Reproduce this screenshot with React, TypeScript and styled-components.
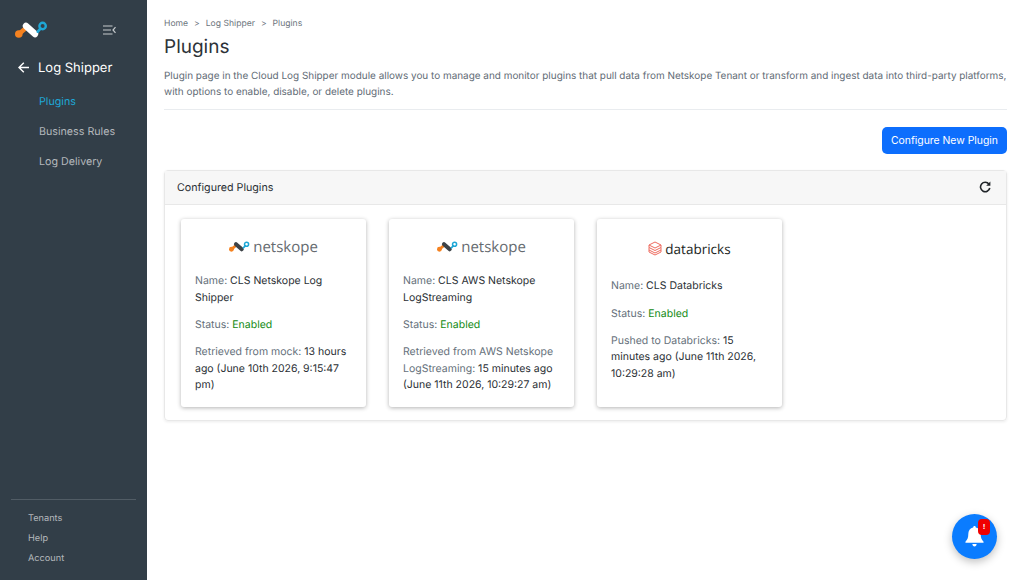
import { FC, ReactNode } from 'react';
import styled, { createGlobalStyle } from 'styled-components';

const GlobalStyle = createGlobalStyle`
  html, body {
    margin: 0;
    padding: 0;
    height: 100%;
    background: #ffffff;
    font-family: Inter, "Liberation Sans", sans-serif;
    text-rendering: geometricPrecision;
  }
  * { box-sizing: border-box; }
`;

const Page = styled.div`
  display: flex;
  position: relative;
  width: 1024px;
  height: 580px;
  overflow: hidden;
`;

const Sidebar = styled.aside`
  display: flex;
  flex-direction: column;
  flex: 0 0 147px;
  height: 580px;
  background: #323e48;
`;

const SidebarTop = styled.div`
  display: flex;
  align-items: center;
  justify-content: space-between;
  height: 22px;
  margin-top: 19px;
  padding: 0 31px 0 15px;
`;

const ModuleTitle = styled.div`
  display: flex;
  align-items: center;
  gap: 9px;
  margin-top: 15.5px;
  padding-left: 18px;
  height: 22px;
  color: #ffffff;
  font-size: 13px;
  font-weight: 400;
`;

const NavList = styled.nav`
  display: flex;
  flex-direction: column;
  gap: 14px;
  margin-top: 15.5px;
  padding-left: 39px;
`;

const NavItem = styled.div<{ $active?: boolean }>`
  height: 16px;
  line-height: 16px;
  font-size: 10.7px;
  font-weight: 400;
  color: ${({ $active }) => ($active ? '#1ea7d6' : '#b4b8bc')};
`;

const SidebarFooter = styled.div`
  display: flex;
  flex-direction: column;
  gap: 6px;
  margin: auto 11px 14px;
  padding: 12.5px 0 0 17px;
  border-top: 1px solid #515c65;
`;

const FooterItem = styled.div`
  height: 14px;
  line-height: 14px;
  font-size: 9.2px;
  color: #b4b8bc;
`;

const Main = styled.main`
  flex: 1;
  padding: 18px 17px 0 17px;
`;

const Breadcrumbs = styled.div`
  display: flex;
  gap: 6px;
  height: 12px;
  line-height: 12px;
  font-size: 8.6px;
  color: #6c757d;
`;

const PageTitle = styled.h1`
  margin: 5px 0 0;
  height: 24px;
  line-height: 24px;
  font-size: 19px;
  font-weight: 400;
  color: #2d3338;
`;

const Description = styled.p`
  margin: 9.4px 0 0;
  padding-bottom: 8.6px;
  border-bottom: 1px solid #e9ecef;
  line-height: 16px;
  font-size: 9.95px;
  color: #5f6b75;
`;

const Actions = styled.div`
  display: flex;
  justify-content: flex-end;
  margin-top: 17px;
`;

const PrimaryButton = styled.button`
  width: 125px;
  height: 27px;
  padding: 0;
  border: 0;
  border-radius: 5px;
  background: #0d6efd;
  color: #ffffff;
  font-family: inherit;
  font-size: 10.4px;
`;

const Panel = styled.section`
  margin-top: 16px;
  border: 1px solid #e8e8e8;
  border-radius: 4px;
  box-shadow: 0 1px 3px rgba(0, 0, 0, 0.08);
`;

const PanelHeader = styled.header`
  display: flex;
  align-items: center;
  justify-content: space-between;
  height: 34px;
  padding: 0 15px 0 12px;
  background: #f7f7f7;
  border-bottom: 1px solid #e8e8e8;
  font-size: 10.7px;
  font-weight: 400;
  color: #2b3035;
`;

const CardGrid = styled.div`
  display: flex;
  gap: 23px;
  padding: 14px 16px 13px;
`;

const Card = styled.article`
  display: flex;
  flex-direction: column;
  width: 185px;
  height: 188px;
  padding: 0 14px;
  border-radius: 3px;
  background: #ffffff;
  box-shadow: 0 1px 4px rgba(0, 0, 0, 0.3);
`;

const LogoRow = styled.div<{ $top: number; $bottom: number; $gap: number }>`
  display: flex;
  align-items: center;
  justify-content: center;
  gap: ${({ $gap }) => $gap}px;
  height: 24px;
  margin: ${({ $top, $bottom }) => `${$top}px 0 ${$bottom}px`};
`;

const LogoWord = styled.span<{ $dark?: boolean }>`
  font-family: "Open Sans", sans-serif;
  font-size: ${({ $dark }) => ($dark ? '13.5px' : '15px')};
  color: ${({ $dark }) => ($dark ? '#1b1f23' : '#666b70')};
  font-weight: ${({ $dark }) => ($dark ? 500 : 400)};
`;

const Field = styled.p`
  margin: 0 0 11px;
  line-height: 16.3px;
  font-size: 10.5px;
  color: #2b3035;
`;

const Label = styled.span`
  color: #66717b;
`;

const Enabled = styled.span`
  color: #128a12;
`;

const BellButton = styled.button`
  position: absolute;
  right: 27px;
  bottom: 21px;
  display: flex;
  align-items: center;
  justify-content: center;
  width: 45px;
  height: 45px;
  border: 0;
  border-radius: 50%;
  background: #0a7cff;
  box-shadow: 0 3px 8px rgba(0, 0, 0, 0.25);
`;

const Badge = styled.span`
  position: absolute;
  top: 5px;
  right: 7px;
  width: 12px;
  height: 16px;
  line-height: 16px;
  border-radius: 4px;
  background: #f00000;
  color: #ffffff;
  font-size: 8px;
  font-weight: 700;
  text-align: center;
`;

const NetskopeMark: FC<{ size: number; light?: boolean }> = ({ size, light }) => (
  <svg width={size} height={(size * 18) / 33} viewBox="0 0 33 18" fill="none">
    <path d="M3.6 13.2 L9.5 8.2" stroke="#f58220" strokeWidth="4.4" strokeLinecap="round" />
    <circle cx="3.8" cy="13" r="3.8" fill="#f58220" />
    <path
      d="M11 5 L20 13"
      stroke={light ? '#ffffff' : '#3d4348'}
      strokeWidth="6.4"
      strokeLinecap="round"
    />
    <path d="M22.8 10.6 L25.4 7.6" stroke="#1ea7d6" strokeWidth="2.8" strokeLinecap="round" />
    <circle cx="27.6" cy="5" r="3.2" stroke="#1ea7d6" strokeWidth="2.4" />
  </svg>
);

const DatabricksMark = () => (
  <svg width="14" height="15" viewBox="0 0 14 15" fill="none" stroke="#ee6b5f" strokeWidth="1">
    <path d="M7 1 L13 4 L7 7 L1 4 Z" />
    <path d="M1 4 V6.5 L7 9.5 L13 6.5 V4" />
    <path d="M1 6.5 V9 L7 12 L13 9 V6.5" />
    <path d="M1 9 V11 L7 14 L13 11 V9" />
  </svg>
);

const CollapseIcon = () => (
  <svg width="13" height="10" viewBox="0 0 13 10" fill="none" stroke="#c5c9cc" strokeWidth="1.2">
    <path d="M0 1 H9.5 M0 5 H8 M0 9 H9.5" />
    <path d="M12.5 2.2 L10 5 L12.5 7.8" />
  </svg>
);

const BackArrow = () => (
  <svg width="11" height="11" viewBox="0 0 11 11" fill="none" stroke="#ffffff" strokeWidth="1.4">
    <path d="M11 5.5 H1 M5.8 0.7 L1 5.5 L5.8 10.3" />
  </svg>
);

const RefreshIcon = () => (
  <svg width="12" height="12" viewBox="0 0 12 12" fill="none">
    <path d="M10 3.2 A4.7 4.7 0 1 0 10.8 7" stroke="#212529" strokeWidth="1.6" />
    <path d="M11.4 0.6 V4.8 H7.2 Z" fill="#212529" />
  </svg>
);

const BellIcon = () => (
  <svg width="19" height="21" viewBox="0 0 19 21" fill="#ffffff">
    <path d="M9.5 0 C8.6 0 8.2 0.7 8.2 1.5 C5 2.2 3.3 4.7 3.3 8 C3.3 12 2.4 13.6 0.6 15.4 C0.1 16 0.4 16.8 1.2 16.8 H17.8 C18.6 16.8 18.9 16 18.4 15.4 C16.6 13.6 15.7 12 15.7 8 C15.7 4.7 14 2.2 10.8 1.5 C10.8 0.7 10.4 0 9.5 0 Z" />
    <path d="M7.4 18 H11.6 C11.6 19.5 10.7 20.5 9.5 20.5 C8.3 20.5 7.4 19.5 7.4 18 Z" />
  </svg>
);

const NetskopeLogo = () => (
  <LogoRow $top={16} $bottom={14.5} $gap={3}>
    <NetskopeMark size={21} />
    <LogoWord>netskope</LogoWord>
  </LogoRow>
);

const DatabricksLogo = () => (
  <LogoRow $top={18} $bottom={17.5} $gap={3}>
    <DatabricksMark />
    <LogoWord $dark>databricks</LogoWord>
  </LogoRow>
);

interface PluginCardProps {
  logo: ReactNode;
  name: string;
  retrievedLabel: string;
  retrievedValue: string;
}

const PluginCard: FC<PluginCardProps> = ({ logo, name, retrievedLabel, retrievedValue }) => (
  <Card>
    {logo}
    <Field>
      <Label>Name: </Label>
      {name}
    </Field>
    <Field>
      <Label>Status: </Label>
      <Enabled>Enabled</Enabled>
    </Field>
    <Field>
      <Label>{retrievedLabel} </Label>
      {retrievedValue}
    </Field>
  </Card>
);

const plugins: PluginCardProps[] = [
  {
    logo: <NetskopeLogo />,
    name: 'CLS Netskope Log Shipper',
    retrievedLabel: 'Retrieved from mock:',
    retrievedValue: '13 hours ago (June 10th 2026, 9:15:47 pm)',
  },
  {
    logo: <NetskopeLogo />,
    name: 'CLS AWS Netskope LogStreaming',
    retrievedLabel: 'Retrieved from AWS Netskope LogStreaming:',
    retrievedValue: '15 minutes ago (June 11th 2026, 10:29:27 am)',
  },
  {
    logo: <DatabricksLogo />,
    name: 'CLS Databricks',
    retrievedLabel: 'Pushed to Databricks:',
    retrievedValue: '15 minutes ago (June 11th 2026, 10:29:28 am)',
  },
];

export default function App() {
  return (
    <Page>
      <GlobalStyle />
      <Sidebar>
        <SidebarTop>
          <NetskopeMark size={33} light />
          <CollapseIcon />
        </SidebarTop>
        <ModuleTitle>
          <BackArrow />
          Log Shipper
        </ModuleTitle>
        <NavList>
          <NavItem $active>Plugins</NavItem>
          <NavItem>Business Rules</NavItem>
          <NavItem>Log Delivery</NavItem>
        </NavList>
        <SidebarFooter>
          <FooterItem>Tenants</FooterItem>
          <FooterItem>Help</FooterItem>
          <FooterItem>Account</FooterItem>
        </SidebarFooter>
      </Sidebar>
      <Main>
        <Breadcrumbs>
          <span>Home</span>
          <span>&gt;</span>
          <span>Log Shipper</span>
          <span>&gt;</span>
          <span>Plugins</span>
        </Breadcrumbs>
        <PageTitle>Plugins</PageTitle>
        <Description>
          Plugin page in the Cloud Log Shipper module allows you to manage and monitor plugins that
          pull data from Netskope Tenant or transform and ingest data into third-party platforms,
          with options to enable, disable, or delete plugins.
        </Description>
        <Actions>
          <PrimaryButton>Configure New Plugin</PrimaryButton>
        </Actions>
        <Panel>
          <PanelHeader>
            Configured Plugins
            <RefreshIcon />
          </PanelHeader>
          <CardGrid>
            {plugins.map((plugin) => (
              <PluginCard key={plugin.name} {...plugin} />
            ))}
          </CardGrid>
        </Panel>
      </Main>
      <BellButton>
        <BellIcon />
        <Badge>!</Badge>
      </BellButton>
    </Page>
  );
}
